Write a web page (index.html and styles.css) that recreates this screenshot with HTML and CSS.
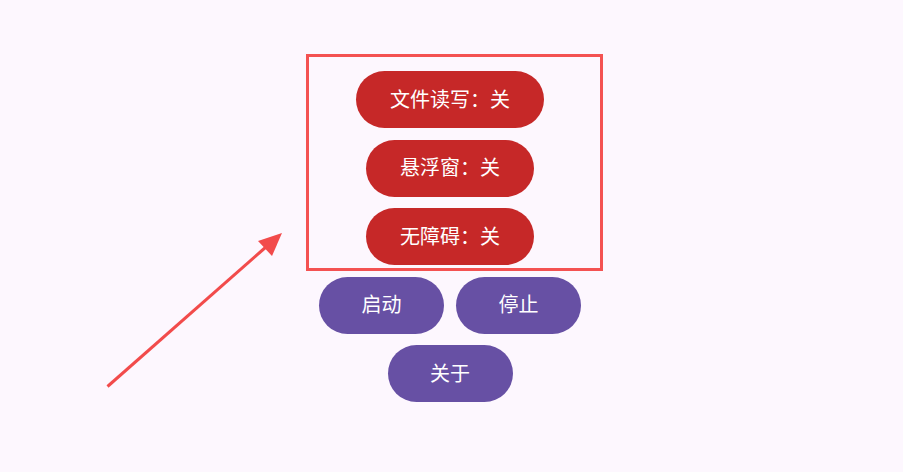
FILE: index.html
```html
<!DOCTYPE html>
<html lang="zh-CN">
<head>
<meta charset="utf-8">
<title>权限</title>
<link rel="stylesheet" href="styles.css">
</head>
<body>
<main class="screen">
  <div class="stack">
    <button class="btn btn-danger btn-wide">文件读写：关</button>
    <button class="btn btn-danger">悬浮窗：关</button>
    <button class="btn btn-danger">无障碍：关</button>
    <div class="row">
      <button class="btn btn-primary">启动</button>
      <button class="btn btn-primary">停止</button>
    </div>
    <button class="btn btn-primary">关于</button>
  </div>
  <div class="highlight-box"></div>
  <svg class="annotation-arrow" width="903" height="472" viewBox="0 0 903 472">
    <line x1="107.5" y1="386.5" x2="266" y2="247" stroke="#f24b4b" stroke-width="3" stroke-linecap="butt"/>
    <polygon points="282,233 258,241 272,256" fill="#f24b4b"/>
  </svg>
</main>
</body>
</html>
```

FILE: styles.css
```css
html, body {
  margin: 0;
  padding: 0;
  background: #fdf7fe;
}

.screen {
  position: relative;
  width: 903px;
  height: 472px;
  overflow: hidden;
  font-family: "Noto Sans CJK SC", "Noto Sans", sans-serif;
}

.stack {
  display: flex;
  flex-direction: column;
  align-items: center;
  gap: 11.5px;
  padding-top: 71px;
  padding-right: 3px;
}

.row {
  display: flex;
  gap: 12px;
}

.btn {
  height: 57px;
  border: none;
  border-radius: 28.5px;
  padding: 0 34px 2px;
  font-family: inherit;
  font-size: 20px;
  font-weight: 400;
  color: #ffffff;
  line-height: 1;
  display: flex;
  align-items: center;
  justify-content: center;
}

.btn-danger {
  background: #c62828;
  min-width: 168px;
}

.btn-wide {
  min-width: 188px;
}

.btn-primary {
  background: #6750a4;
  width: 125px;
  padding: 0 0 2px 0;
}

.highlight-box {
  position: absolute;
  left: 306px;
  top: 54px;
  width: 297px;
  height: 217px;
  box-sizing: border-box;
  border: 3px solid #f45252;
}

.annotation-arrow {
  position: absolute;
  left: 0;
  top: 0;
}
```
